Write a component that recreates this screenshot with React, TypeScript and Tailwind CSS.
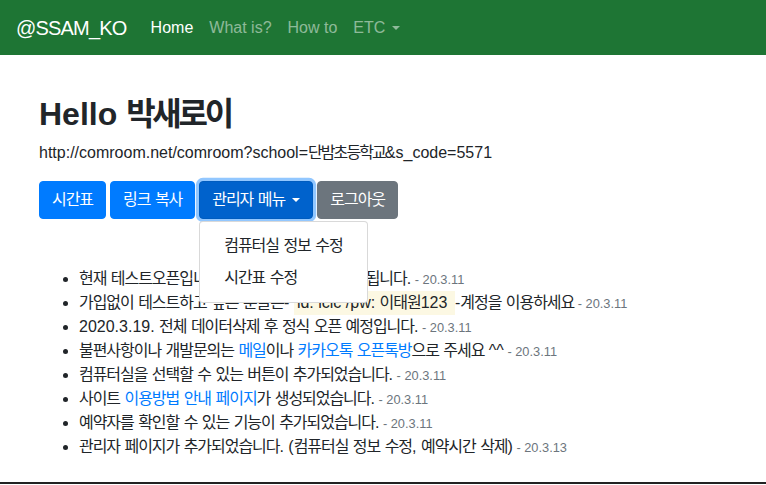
import React from "react";

const HANGUL = /([\u3131-\u318E\uAC00-\uD7A3]+)/;

function T({ s, k = "tracking-[-0.065em]" }: { s: string; k?: string }) {
  return (
    <span>
      {s.split(HANGUL).map((part, i) =>
        /[\u3131-\u318E\uAC00-\uD7A3]/.test(part) ? (
          <span key={i} className={"leading-none " + k}>
            {part}
          </span>
        ) : (
          <React.Fragment key={i}>{part}</React.Fragment>
        )
      )}
    </span>
  );
}

function D({ d }: { d: string }) {
  return <small className="text-[80%] leading-none text-[#6c757d]"> - {d}</small>;
}

function A({ s }: { s: string }) {
  return (
    <a className="text-[#007bff]" href="#">
      <T s={s} />
    </a>
  );
}

export default function App() {
  return (
    <div className="min-h-[485px] bg-white font-['Liberation_Sans','Noto_Sans_CJK_KR',sans-serif] text-base leading-[1.5] text-[#212529]">
      <nav className="flex h-[55px] items-center bg-[#1e7534] px-4">
        <a href="#" className="mr-4 text-[20px] leading-[30px] tracking-[-0.8px] text-white">
          @SSAM_KO
        </a>
        <ul className="flex items-center">
          <li>
            <a href="#" className="block px-2 text-white">Home</a>
          </li>
          <li>
            <a href="#" className="block px-2 text-white/50">What is?</a>
          </li>
          <li>
            <a href="#" className="block px-2 text-white/50">How to</a>
          </li>
          <li>
            <a href="#" className="flex items-center px-2 text-white/50">
              ETC
              <span className="ml-[0.4em] inline-block border-x-[0.3em] border-t-[0.3em] border-x-transparent border-t-white/50" />
            </a>
          </li>
        </ul>
      </nav>

      <div className="px-[39px]">
        <h1 className="mt-[40px] mb-2 text-[32px] font-semibold leading-[1.2]">
          <T s="Hello 박새로이" k="tracking-[-0.1em]" />
        </h1>
        <p className="mb-4">
          <T s="http://comroom.net/comroom?school=단밤초등학교&s_code=5571" k="tracking-[-0.12em]" />
        </p>

        <div className="relative flex items-start gap-1">
          <button className="h-[38px] rounded-[4px] border border-[#007bff] bg-[#007bff] px-3 text-white">
            <T s="시간표" />
          </button>
          <button className="h-[38px] rounded-[4px] border border-[#007bff] bg-[#007bff] px-3 text-white">
            <T s="링크 복사" />
          </button>
          <div className="relative">
            <button className="flex h-[38px] items-center rounded-[4px] border border-[#005cbf] bg-[#0062cc] px-3 text-white shadow-[0_0_0_3.2px_rgba(38,143,255,0.5)]">
              <T s="관리자 메뉴" />
              <span className="ml-[0.45em] inline-block border-x-[0.3em] border-t-[0.3em] border-x-transparent border-t-white" />
            </button>
            <div className="absolute left-0 top-[40px] z-10 w-max min-w-[160px] whitespace-nowrap rounded-[4px] border border-black/15 bg-white py-2 text-left">
              <a href="#" className="block px-6 py-1 text-[#212529]">
                <T s="컴퓨터실 정보 수정" />
              </a>
              <a href="#" className="block px-6 py-1 text-[#212529]">
                <T s="시간표 수정" />
              </a>
            </div>
          </div>
          <button className="h-[38px] rounded-[4px] border border-[#6c757d] bg-[#6c757d] px-3 text-white">
            <T s="로그아웃" />
          </button>
        </div>

        <ul className="mt-[48px] list-disc pl-10">
          <li>
            <T s="현재 테스트오픈입니다. 예약 데이터는 초기화 됩니다." />
            <D d="20.3.11" />
          </li>
          <li>
            <T s="가입없이 테스트하고 싶은 분들은- " />
            <mark className="bg-[#fcf8e3] p-[0.2em] text-[#212529]">
              <T s=" id: icic /pw: 이태원123 " />
            </mark>
            <T s=" -계정을 이용하세요" />
            <D d="20.3.11" />
          </li>
          <li>
            <T s="2020.3.19. 전체 데이터삭제 후 정식 오픈 예정입니다." />
            <D d="20.3.11" />
          </li>
          <li>
            <T s="불편사항이나 개발문의는 " />
            <A s="메일" />
            <T s="이나 " />
            <A s="카카오톡 오픈톡방" />
            <T s="으로 주세요 ^^" />
            <D d="20.3.11" />
          </li>
          <li>
            <T s="컴퓨터실을 선택할 수 있는 버튼이 추가되었습니다." />
            <D d="20.3.11" />
          </li>
          <li>
            <T s="사이트 " />
            <A s="이용방법 안내 페이지" />
            <T s="가 생성되었습니다." />
            <D d="20.3.11" />
          </li>
          <li>
            <T s="예약자를 확인할 수 있는 기능이 추가되었습니다." />
            <D d="20.3.11" />
          </li>
          <li>
            <T s="관리자 페이지가 추가되었습니다. (컴퓨터실 정보 수정, 예약시간 삭제)" />
            <D d="20.3.13" />
          </li>
        </ul>
      </div>
      <div className="mt-[23px] border-t-2 border-[#222]" />
    </div>
  );
}
